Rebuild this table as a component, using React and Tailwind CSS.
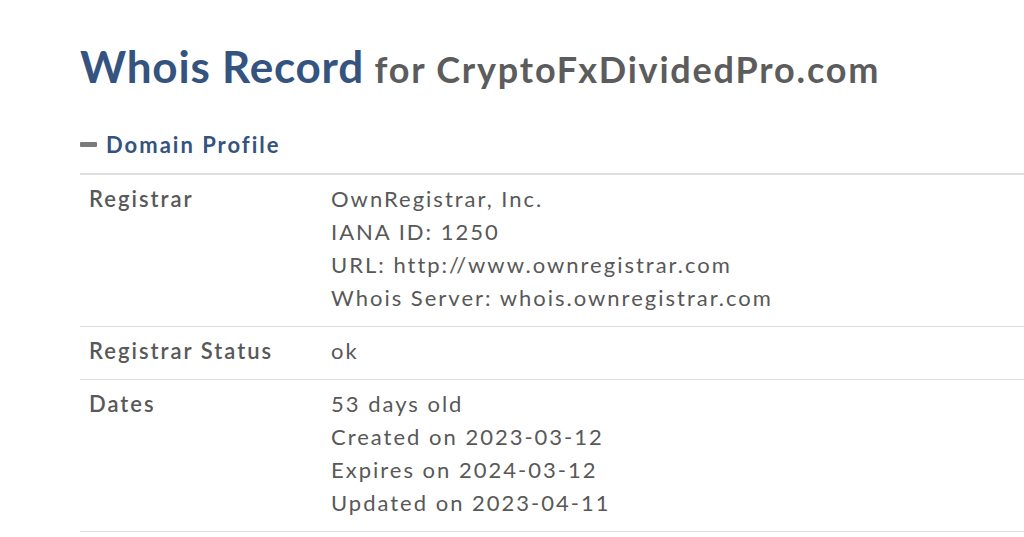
const rows = [
  {
    label: 'Registrar',
    lines: [
      'OwnRegistrar, Inc.',
      'IANA ID: 1250',
      'URL: http://www.ownregistrar.com',
      'Whois Server: whois.ownregistrar.com',
    ],
  },
  { label: 'Registrar Status', lines: ['ok'] },
  {
    label: 'Dates',
    lines: [
      '53 days old',
      'Created on 2023-03-12',
      'Expires on 2024-03-12',
      'Updated on 2023-04-11',
    ],
  },
];

export default function App() {
  return (
    <div className="w-[1024px] h-[537px] overflow-hidden bg-white font-['Lato','Open_Sans',sans-serif]">
      <div className="pl-[80px] w-[1100px]">
        <h1 className="pt-[38px] h-[112px] leading-[56px]">
          <span className="text-[44px] font-bold text-[#34537f] tracking-[0.8px]">Whois Record</span>
          <span className="text-[36px] font-bold text-[#5c5c5c] tracking-[1.8px]"> for CryptoFxDividedPro.com</span>
        </h1>
        <div className="flex items-center gap-[9px] h-[61px] pt-[4px]">
          <span className="block w-[17px] h-[5px] rounded-[1px] bg-[#7b7b7b]" />
          <span className="text-[22px] font-bold text-[#34537f] tracking-[2px]">Domain Profile</span>
        </div>
        <div className="border-t-2 border-[#dedede]">
          {rows.map(r => (
            <div key={r.label} className="grid grid-cols-[251px_1fr] border-b border-[#dedede] pt-[7px] pb-[12px] text-[22px] leading-[33px] tracking-[2px] text-[#585858]">
              <div className="pl-[9px] font-semibold">{r.label}</div>
              <div>
                {r.lines.map(l => (
                  <div key={l}>{l}</div>
                ))}
              </div>
            </div>
          ))}
        </div>
      </div>
    </div>
  );
}
